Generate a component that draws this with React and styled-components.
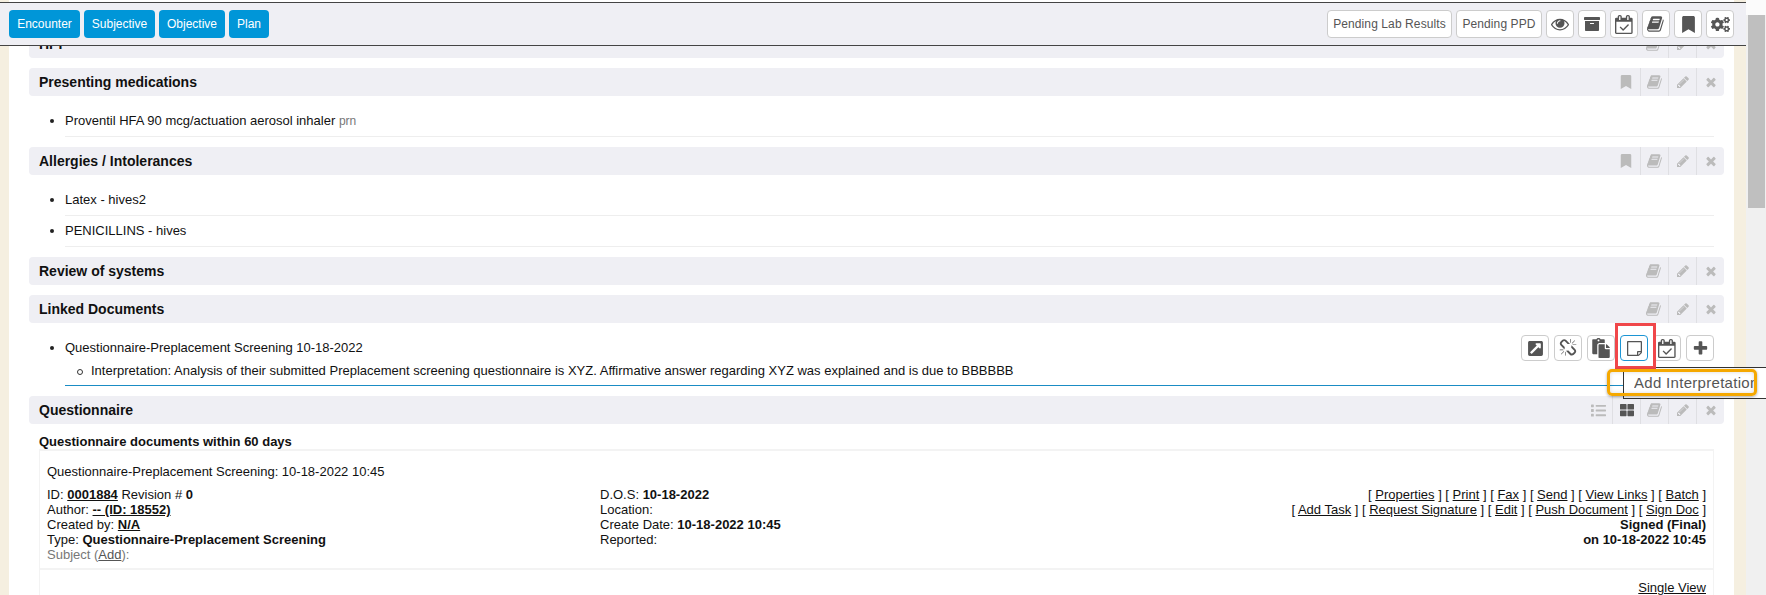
import React from 'react';
import styled, { createGlobalStyle } from 'styled-components';
import {
  FaArchive, FaBookmark, FaCogs, FaList, FaThLarge, FaExternalLinkSquareAlt, FaPaste,
} from 'react-icons/fa';

const GlobalStyle = createGlobalStyle`
  html, body { margin: 0; padding: 0; background: #fff; }
  body { font-family: "Liberation Sans", Arial, sans-serif; font-size: 13px; color: #111; }
  * { box-sizing: border-box; }
`;

const Page = styled.div`
  position: relative;
  display: grid;
  grid-template-columns: 1fr 20px;
  width: 1766px;
  height: 595px;
  overflow: hidden;
`;

const Viewport = styled.div`
  position: relative;
  height: 595px;
  overflow: hidden;
  padding: 0 12px 0 9px;
  background: #f5efe0;
`;

const Panel = styled.main`
  height: 100%;
  padding: 30px 10px 0 20px;
  background: #fff;
`;

const ScrollTrack = styled.div`
  padding: 15px 1px 0 2px;
  background: linear-gradient(#fbfbfb 15px, #f0f0f0 15px);
`;

const ScrollThumb = styled.div`
  height: 193px;
  background: #bfbfbf;
`;

const TopBar = styled.header`
  position: absolute;
  top: 2px;
  left: 0;
  right: 0;
  z-index: 5;
  display: flex;
  justify-content: space-between;
  align-items: center;
  height: 44px;
  padding: 0 12px 0 9px;
  background: #efeff4;
  border-top: 1px solid #444;
  border-bottom: 1px solid #444;
`;

const ButtonGroup = styled.div`
  display: flex;
  gap: 4px;
`;

const NavButton = styled.button`
  height: 28px;
  width: ${(p) => p.$w}px;
  padding: 0;
  border: 0;
  border-radius: 4px;
  background: #0096d8;
  color: #fff;
  font: 12px "Liberation Sans", Arial, sans-serif;
`;

const ToolButton = styled.button`
  display: flex;
  align-items: center;
  justify-content: center;
  height: ${(p) => p.$h || 28}px;
  width: ${(p) => p.$w || 28}px;
  padding: 0;
  border: 1px solid ${(p) => (p.$active ? '#1c95d4' : '#ccc')};
  border-radius: 4px;
  background: #fff;
  color: #555;
  font: 12px "Liberation Sans", Arial, sans-serif;
  letter-spacing: 0.1px;
  svg { display: block; fill: currentColor; }
`;

const Section = styled.section`
  margin-bottom: 10px;
`;

const SectionHeader = styled.div`
  display: flex;
  align-items: center;
  justify-content: space-between;
  height: 28px;
  padding-left: 10px;
  border-radius: 4px;
  background: #efeff4;
`;

const SectionTitle = styled.h3`
  margin: 0;
  font-size: 14px;
  line-height: 28px;
  font-weight: 700;
  color: #111;
`;

const HeaderActions = styled.div`
  display: flex;
  height: 100%;
`;

const HeaderIcon = styled.span`
  display: flex;
  align-items: center;
  justify-content: center;
  width: 28px;
  height: 100%;
  color: ${(p) => (p.$dark ? '#555' : '#bbb')};
  border-left: ${(p) => (p.$plain ? '0' : '1px solid #dfdfe3')};
  svg { display: block; fill: currentColor; }
`;

const ItemList = styled.ul`
  list-style: none;
  margin: 0;
  padding: 10px 10px 0 36px;
`;

const Item = styled.li`
  position: relative;
  display: flex;
  justify-content: space-between;
  padding: 7px 0 ${(p) => (p.$linked ? 7 : 8)}px;
  line-height: 15px;
  border-bottom: 1px solid ${(p) => (p.$linked ? '#1a8cc4' : '#eee')};
  &::before {
    content: '';
    position: absolute;
    left: -15px;
    top: 13px;
    width: 4px;
    height: 4px;
    border-radius: 50%;
    background: #222;
  }
`;

const Muted = styled.span`
  color: #777;
  font-size: 12px;
  line-height: 1;
`;

const SubItem = styled.div`
  position: relative;
  margin: 8px 0 0 26px;
  &::before {
    content: '';
    position: absolute;
    left: -14px;
    top: 6px;
    width: 4px;
    height: 4px;
    border: 1px solid #333;
    border-radius: 50%;
  }
`;

const RowActions = styled.div`
  display: flex;
  gap: 5px;
  margin-top: -5px;
`;

const DocBlock = styled.div`
  padding: 10px 10px 0 10px;
`;

const DocHeading = styled.div`
  font-weight: 700;
  line-height: 15px;
`;

const DocCard = styled.div`
  padding: 0 7px;
  border-top: 2px solid #f3f3f3;
  border-left: 1px solid #f3f3f3;
  border-right: 1px solid #f3f3f3;
  line-height: 15px;
`;

const DocTitle = styled.div`
  padding-top: 13px;
  height: 36px;
`;

const DocColumns = styled.div`
  display: grid;
  grid-template-columns: repeat(3, 1fr);
  height: 83px;
  margin: 0 -7px;
  padding: 0 7px;
  border-bottom: 2px solid #f3f3f3;
`;

const DocColumn = styled.div`
  text-align: ${(p) => (p.$right ? 'right' : 'left')};
`;

const DocLink = styled.a`
  color: ${(p) => (p.$muted ? '#555' : 'inherit')};
  text-decoration: underline;
`;

const SubjectLine = styled.div`
  color: #777;
`;

const CardFooter = styled.div`
  padding-top: 10px;
  text-align: right;
`;

// Annotations drawn on top of the screenshot
const RedMark = styled.div`
  position: absolute;
  left: 1615px;
  top: 323px;
  z-index: 7;
  width: 41px;
  height: 46px;
  border: 3px solid #f0474a;
`;

const Tooltip = styled.div`
  position: absolute;
  left: 1623px;
  top: 367px;
  right: 0;
  z-index: 6;
  height: 32px;
  padding: 7px 0 0 10px;
  background: #fff;
  border: 1px solid #333;
  border-right: 0;
  color: #555;
  font-size: 15px;
  line-height: 16px;
  letter-spacing: 0.3px;
`;

const TooltipText = styled.div`
  width: 121px;
  overflow: hidden;
  white-space: nowrap;
`;

const OrangeMark = styled.div`
  position: absolute;
  left: 1607px;
  top: 369px;
  z-index: 7;
  width: 150px;
  height: 27px;
  border: 3px solid #f5a800;
  border-radius: 5px;
  box-shadow: 0 1px 3px rgba(0, 0, 0, 0.35), inset 0 0 4px rgba(0, 0, 0, 0.15);
`;

// font-awesome 4 glyphs, the react-icons set has no match for these
const GLYPHS = {
  book: 'M1639 478q40 57 18 129l-275 906q-19 64-76.5 107.5t-122.5 43.5h-923q-77 0-148.5-53.5t-99.5-131.5q-24-67-2-127 0-4 3-27t4-37q1-8-3-21.5t-3-19.5q2-11 8-21t16.5-23.5 16.5-23.5q23-38 45-91.5t30-91.5q3-10 .5-30t-.5-28q3-11 17-28t17-23q21-36 42-92t25-90q1-9-2.5-32t.5-28q4-13 22-30.5t22-22.5q19-26 42.5-84.5t27.5-96.5q1-8-3-25.5t-2-26.5q2-8 9-18t18-23 17-21q8-12 16.5-30.5t15-35 16-36 19.5-32 26.5-23.5 36-11.5 47.5 5.5l-1 3q38-9 51-9h761q74 0 114 56t18 130l-274 906q-36 119-71.5 153.5t-128.5 34.5h-869q-27 0-38 15-11 16-1 43 24 70 144 70h923q29 0 56-15.5t35-41.5l300-987q7-22 5-57 38 15 59 43zm-1064 2q-4 13 2 22.5t20 9.5h608q13 0 25.5-9.5t16.5-22.5l21-64q4-13-2-22.5t-20-9.5h-608q-13 0-25.5 9.5t-16.5 22.5zm-83 256q-4 13 2 22.5t20 9.5h608q13 0 25.5-9.5t16.5-22.5l21-64q4-13-2-22.5t-20-9.5h-608q-13 0-25.5 9.5t-16.5 22.5z',
  times: 'M1490 1322q0 40-28 68l-136 136q-28 28-68 28t-68-28l-294-294-294 294q-28 28-68 28t-68-28l-136-136q-28-28-28-68t28-68l294-294-294-294q-28-28-28-68t28-68l136-136q28-28 68-28t68 28l294 294 294-294q28-28 68-28t68 28l136 136q28 28 28 68t-28 68l-294 294 294 294q28 28 28 68z',
  plus: 'M1600 736v192q0 40-28 68t-68 28h-416v416q0 40-28 68t-68 28h-192q-40 0-68-28t-28-68v-416h-416q-40 0-68-28t-28-68v-192q0-40 28-68t68-28h416v-416q0-40 28-68t68-28h192q40 0 68 28t28 68v416h416q40 0 68 28t28 68z',
  unlink: 'M503 1271l-256 256q-10 9-23 9-12 0-23-9-9-10-9-23t9-23l256-256q10-9 23-9t23 9q9 10 9 23t-9 23zm169 41v320q0 14-9 23t-23 9-23-9-9-23v-320q0-14 9-23t23-9 23 9 9 23zm-224-224q0 14-9 23t-23 9h-320q-14 0-23-9t-9-23 9-23 23-9h320q14 0 23 9t9 23zm1264 128q0 120-85 203l-147 146q-83 83-203 83-121 0-204-85l-334-335q-21-21-42-56l239-18 273 274q27 27 68 27.5t68-26.5l147-146q28-28 28-67 0-40-28-68l-274-275 18-239q35 21 56 42l336 336q84 86 84 204zm-617-724l-239 18-273-274q-28-28-68-28-39 0-68 27l-147 146q-28 28-28 67 0 40 28 68l274 274-18 240q-35-21-56-42l-336-336q-84-86-84-204 0-120 85-203l147-146q83-83 203-83 121 0 204 85l334 335q21 21 42 56zm633 84q0 14-9 23t-23 9h-320q-14 0-23-9t-9-23 9-23 23-9h320q14 0 23 9t9 23zm-544-544v320q0 14-9 23t-23 9-23-9-9-23v-320q0-14 9-23t23-9 23 9 9 23zm407 151l-256 256q-11 9-23 9t-23-9q-9-10-9-23t9-23l256-256q10-9 23-9t23 9q9 10 9 23t-9 23z',
  calendar: 'M1303 964l-512 512q-10 9-23 9t-23-9l-288-288q-9-10-9-23t9-22l46-46q9-9 22-9t23 9l220 220 444-444q10-9 23-9t22 9l46 46q9 9 9 22t-9 23zm-1175 700h1408v-1024h-1408v1024zm384-1216v-288q0-14-9-23t-23-9h-64q-14 0-23 9t-9 23v288q0 14 9 23t23 9h64q14 0 23-9t9-23zm768 0v-288q0-14-9-23t-23-9h-64q-14 0-23 9t-9 23v288q0 14 9 23t23 9h64q14 0 23-9t9-23zm384-64v1280q0 52-38 90t-90 38h-1408q-52 0-90-38t-38-90v-1280q0-52 38-90t90-38h128v-96q0-66 47-113t113-47h64q66 0 113 47t47 113v96h384v-96q0-66 47-113t113-47h64q66 0 113 47t47 113v96h128q52 0 90 38t38 90z',
  note: 'M1400 1280h-248v248q29-10 41-22l185-185q12-12 22-41zm-280-128h288v-896h-1280v1280h896v-288q0-40 28-68t68-28zm416-928v1024q0 40-20 88t-48 76l-184 184q-28 28-76 48t-88 20h-1024q-40 0-68-28t-28-68v-1344q0-40 28-68t68-28h1344q40 0 68 28t28 68z',
  pencil: 'M491 1536l91-91-235-235-91 91v107h128v128h107zm523-928q0-22-22-22-10 0-17 7l-542 542q-7 7-7 17 0 22 22 22 10 0 17-7l542-542q7-7 7-17zm-54-192l416 416-832 832h-416v-416zm683 96q0 53-37 90l-166 166-416-416 166-165q36-38 90-38 53 0 91 38l235 234q37 39 37 91z',
  eye: 'M1664 960q-152-236-381-353 61 104 61 225 0 185-131.5 316.5t-316.5 131.5-316.5-131.5-131.5-316.5q0-121 61-225-229 117-381 353 133 205 333.5 326.5t434.5 121.5 434.5-121.5 333.5-326.5zm-720-384q0-20-14-34t-34-14q-125 0-214.5 89.5t-89.5 214.5q0 20 14 34t34 14 34-14 14-34q0-86 61-147t147-61q20 0 34-14t14-34zm848 384q0 34-20 69-140 230-376.5 368.5t-499.5 138.5-499.5-139-376.5-368q-20-35-20-69t20-69q140-229 376.5-368t499.5-139 499.5 139 376.5 368q20 35 20 69z',
};

const Glyph = ({ name, size = 14, box = '0 0 1792 1792' }) => (
  <svg width={size} height={size} viewBox={box}>
    <path d={GLYPHS[name]} />
  </svg>
);

const HeaderTools = ({ bookmark = true, views = false }) => (
  <HeaderActions>
    {views && <HeaderIcon $plain><FaList size={15} /></HeaderIcon>}
    {views && <HeaderIcon $dark><FaThLarge size={14} /></HeaderIcon>}
    {bookmark && <HeaderIcon $plain><FaBookmark size={14} /></HeaderIcon>}
    <HeaderIcon $plain={!bookmark && !views}><Glyph name="book" size={16} /></HeaderIcon>
    <HeaderIcon><Glyph name="pencil" size={14} /></HeaderIcon>
    <HeaderIcon><Glyph name="times" size={14} /></HeaderIcon>
  </HeaderActions>
);

export default function App() {
  return (
    <Page>
      <GlobalStyle />
      <Viewport>
        <TopBar>
          <ButtonGroup>
            <NavButton $w={71}>Encounter</NavButton>
            <NavButton $w={71}>Subjective</NavButton>
            <NavButton $w={66}>Objective</NavButton>
            <NavButton $w={40}>Plan</NavButton>
          </ButtonGroup>
          <ButtonGroup>
            <ToolButton $w={125}>Pending Lab Results</ToolButton>
            <ToolButton $w={86}>Pending PPD</ToolButton>
            <ToolButton><Glyph name="eye" size={18} /></ToolButton>
            <ToolButton><FaArchive size={16} /></ToolButton>
            <ToolButton><Glyph name="calendar" size={19} /></ToolButton>
            <ToolButton><Glyph name="book" size={18} /></ToolButton>
            <ToolButton><FaBookmark size={17} /></ToolButton>
            <ToolButton><FaCogs size={19} /></ToolButton>
          </ButtonGroup>
        </TopBar>

        <Panel>
          <Section>
            <SectionHeader>
              <SectionTitle>HPI</SectionTitle>
              <HeaderTools bookmark={false} />
            </SectionHeader>
          </Section>

          <Section>
            <SectionHeader>
              <SectionTitle>Presenting medications</SectionTitle>
              <HeaderTools />
            </SectionHeader>
            <ItemList>
              <Item><span>Proventil HFA 90 mcg/actuation aerosol inhaler <Muted>prn</Muted></span></Item>
            </ItemList>
          </Section>

          <Section>
            <SectionHeader>
              <SectionTitle>Allergies / Intolerances</SectionTitle>
              <HeaderTools />
            </SectionHeader>
            <ItemList>
              <Item>Latex - hives2</Item>
              <Item>PENICILLINS - hives</Item>
            </ItemList>
          </Section>

          <Section>
            <SectionHeader>
              <SectionTitle>Review of systems</SectionTitle>
              <HeaderTools bookmark={false} />
            </SectionHeader>
          </Section>

          <Section>
            <SectionHeader>
              <SectionTitle>Linked Documents</SectionTitle>
              <HeaderTools bookmark={false} />
            </SectionHeader>
            <ItemList>
              <Item $linked>
                <div>
                  Questionnaire-Preplacement Screening 10-18-2022
                  <SubItem>
                    Interpretation: Analysis of their submitted Preplacement screening questionnaire is XYZ. Affirmative answer regarding XYZ was explained and is due to BBBBBB
                  </SubItem>
                </div>
                <RowActions>
                  <ToolButton $h={26}><FaExternalLinkSquareAlt size={17} /></ToolButton>
                  <ToolButton $h={26}><Glyph name="unlink" size={18} /></ToolButton>
                  <ToolButton $h={26}><FaPaste size={20} /></ToolButton>
                  <ToolButton $h={26} $active><Glyph name="note" size={15} box="0 128 1536 1536" /></ToolButton>
                  <ToolButton $h={26}><Glyph name="calendar" size={19} /></ToolButton>
                  <ToolButton $h={26}><Glyph name="plus" size={17} /></ToolButton>
                </RowActions>
              </Item>
            </ItemList>
          </Section>

          <Section>
            <SectionHeader>
              <SectionTitle>Questionnaire</SectionTitle>
              <HeaderTools bookmark={false} views />
            </SectionHeader>
            <DocBlock>
              <DocHeading>Questionnaire documents within 60 days</DocHeading>
              <DocCard>
                <DocTitle>Questionnaire-Preplacement Screening: 10-18-2022 10:45</DocTitle>
                <DocColumns>
                  <DocColumn>
                    <div>ID: <b><DocLink>0001884</DocLink></b> Revision # <b>0</b></div>
                    <div>Author: <b><DocLink>-- (ID: 18552)</DocLink></b></div>
                    <div>Created by: <b><DocLink>N/A</DocLink></b></div>
                    <div>Type: <b>Questionnaire-Preplacement Screening</b></div>
                    <SubjectLine>Subject (<DocLink $muted>Add</DocLink>):</SubjectLine>
                  </DocColumn>
                  <DocColumn>
                    <div>D.O.S: <b>10-18-2022</b></div>
                    <div>Location:</div>
                    <div>Create Date: <b>10-18-2022 10:45</b></div>
                    <div>Reported:</div>
                  </DocColumn>
                  <DocColumn $right>
                    <div>[ <DocLink>Properties</DocLink> ] [ <DocLink>Print</DocLink> ] [ <DocLink>Fax</DocLink> ] [ <DocLink>Send</DocLink> ] [ <DocLink>View Links</DocLink> ] [ <DocLink>Batch</DocLink> ]</div>
                    <div>[ <DocLink>Add Task</DocLink> ] [ <DocLink>Request Signature</DocLink> ] [ <DocLink>Edit</DocLink> ] [ <DocLink>Push Document</DocLink> ] [ <DocLink>Sign Doc</DocLink> ]</div>
                    <div><b>Signed (Final)</b></div>
                    <div><b>on 10-18-2022 10:45</b></div>
                  </DocColumn>
                </DocColumns>
                <CardFooter><DocLink>Single View</DocLink></CardFooter>
              </DocCard>
            </DocBlock>
          </Section>
        </Panel>
      </Viewport>
      <ScrollTrack>
        <ScrollThumb />
      </ScrollTrack>

      <Tooltip><TooltipText>Add Interpretation</TooltipText></Tooltip>
      <RedMark />
      <OrangeMark />
    </Page>
  );
}
